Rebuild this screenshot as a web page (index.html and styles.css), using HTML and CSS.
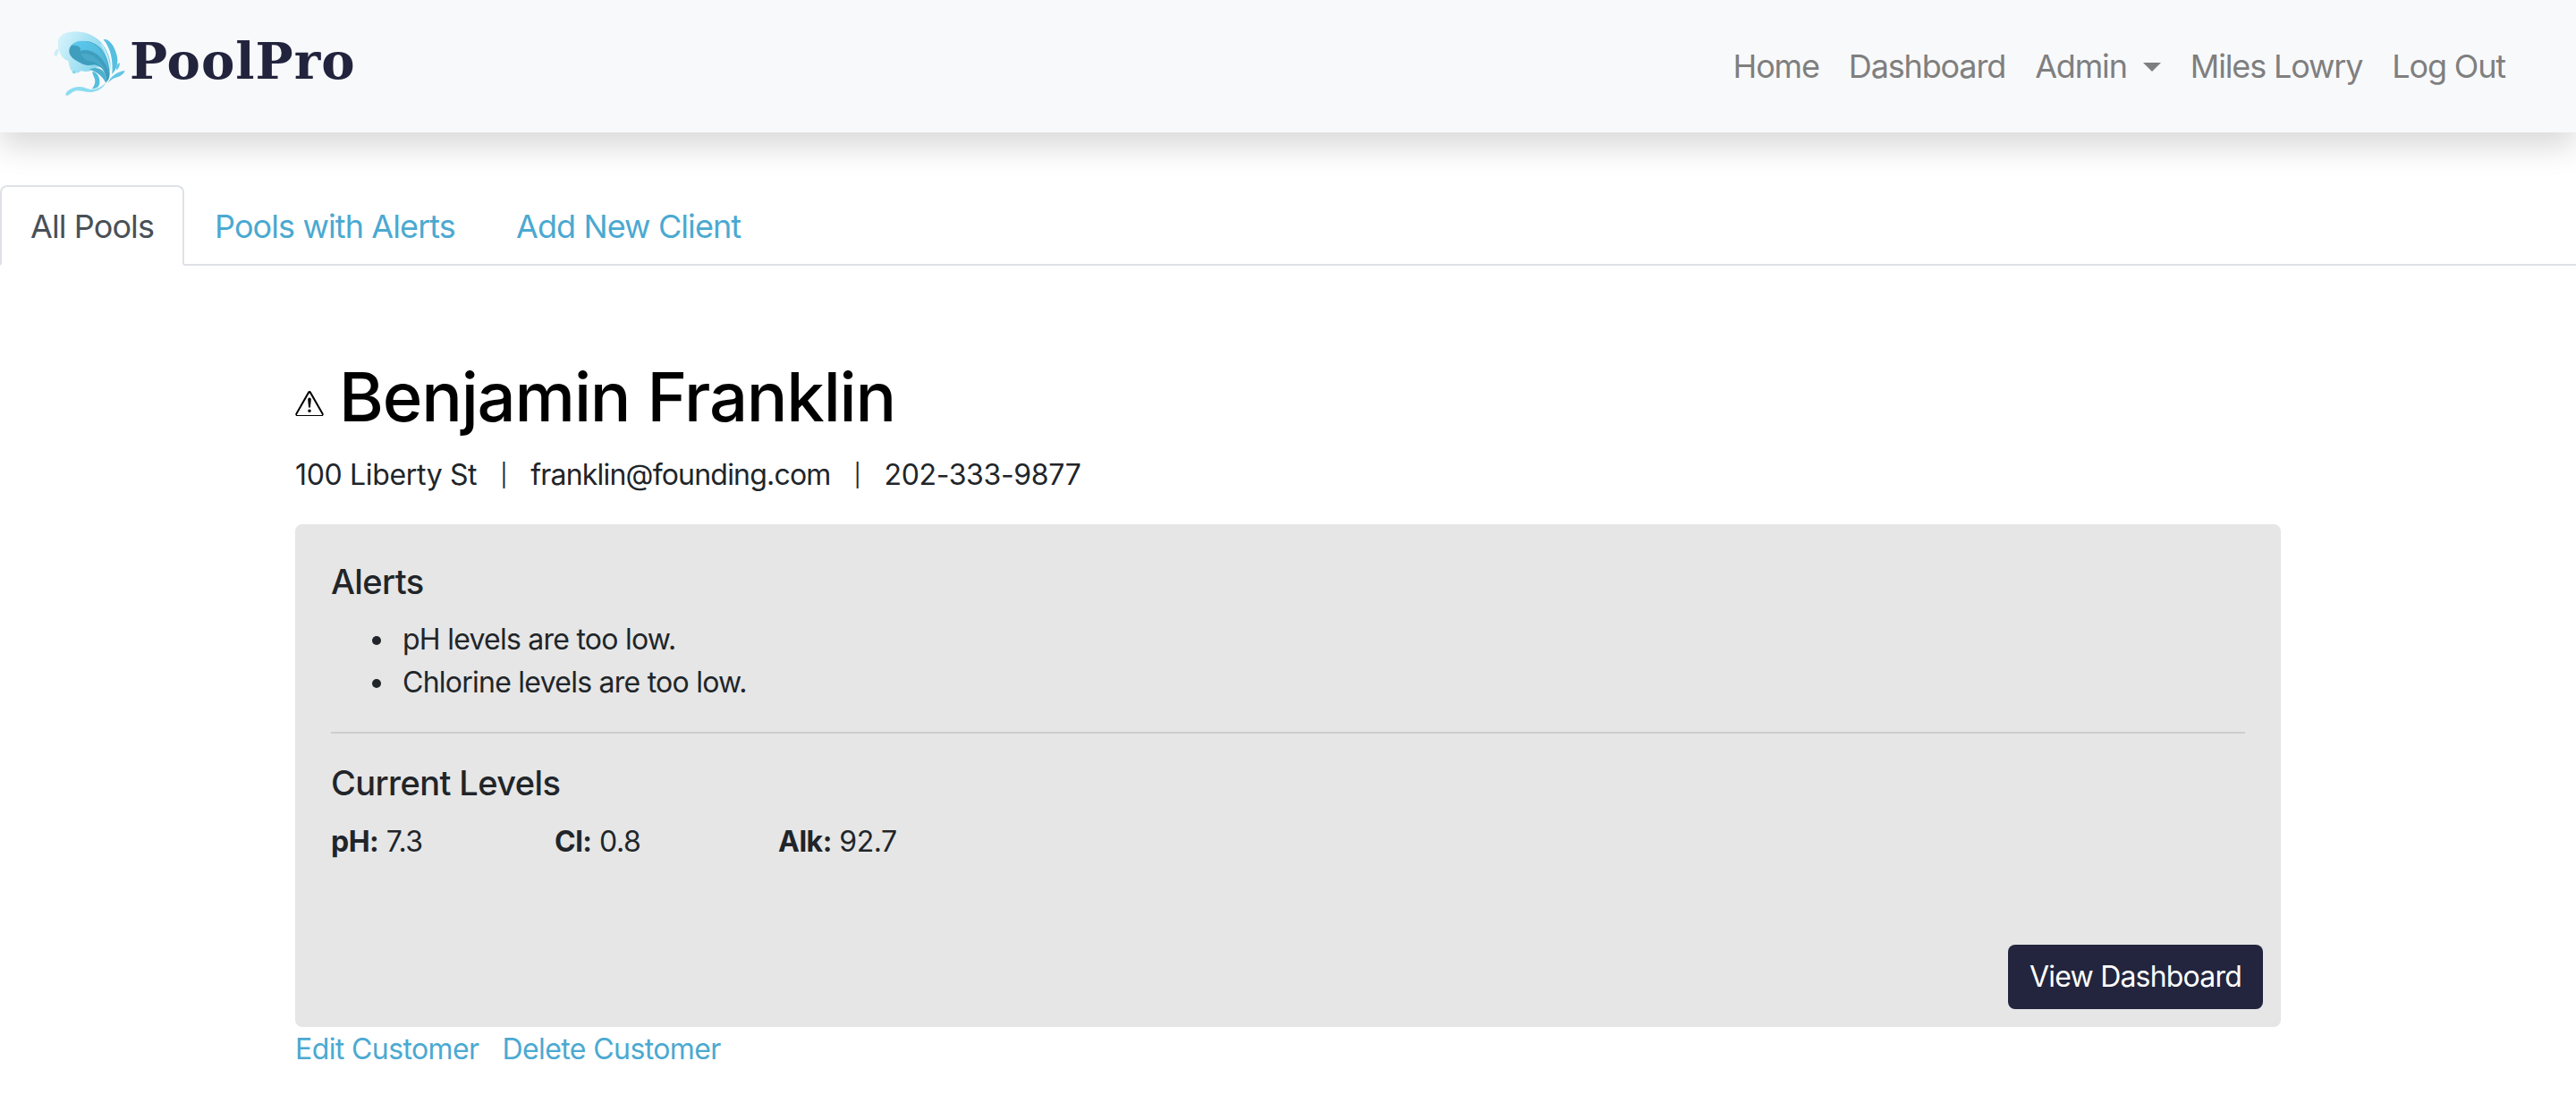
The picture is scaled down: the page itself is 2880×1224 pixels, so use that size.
FILE: index.html
```html
<!DOCTYPE html>
<html lang="en">

<head>
    <meta charset="UTF-8">
    <meta name="viewport" content="width=device-width, initial-scale=1.0">
    <title>PoolPro</title>
    <link rel="stylesheet" href="styles.css">
</head>

<body>
    <header class="navbar">
        <a href="#" class="brand">
            <svg class="brand-logo" viewBox="0 0 300 300" width="100" height="100" aria-hidden="true">
                <defs>
                    <linearGradient id="foam" x1="0" y1="0.1" x2="1" y2="0.5">
                        <stop offset="0" stop-color="#d8f4fc"/>
                        <stop offset="1" stop-color="#7ed3ec"/>
                    </linearGradient>
                    <linearGradient id="curl" x1="0" y1="0" x2="1" y2="0.9">
                        <stop offset="0" stop-color="#5ccaee"/>
                        <stop offset="1" stop-color="#4fb2d2"/>
                    </linearGradient>
                </defs>
                <!-- foam cloud behind the wave -->
                <path fill="url(#foam)" d="M45 78C50 55 85 44 122 50C165 56 198 84 212 122C222 146 224 170 216 185C205 170 188 166 172 170C160 180 140 188 122 180C108 194 88 188 84 168C80 158 82 152 78 146C56 142 40 108 45 78Z"/>
                <path fill="#c8eef8" d="M32 122C34 112 42 106 45 108C47 118 44 128 38 131C34 131 31 128 32 122Z"/>
                <circle cx="98" cy="185" r="5" fill="#7fd3ea"/>
                <!-- wave curl -->
                <path fill="#3f9dbd" d="M82 110C86 88 112 78 145 82C185 90 214 128 218 190C218 202 214 212 208 218C206 195 198 176 184 166C172 158 160 160 148 162C132 162 116 152 106 146C92 138 80 126 82 110Z"/>
                <path fill="#4aa9c9" d="M122 124C150 118 190 136 210 196C194 166 172 150 150 148C138 146 126 136 122 124Z"/>
                <path fill="url(#curl)" d="M88 96C108 72 150 76 178 100C200 120 212 150 216 186C204 152 186 128 160 116C146 110 130 110 118 114C126 100 106 92 88 96Z"/>
                <path fill="#d8f4fc" d="M190 90C208 114 218 146 222 180L219 180C214 146 204 116 188 92Z"/>
                <path fill="#56bfe0" d="M197 76C212 70 232 92 241 125C248 150 243 172 226 192C230 150 222 105 197 76Z"/>
                <!-- strands and drops -->
                <path fill="#4eb0cf" d="M150 176C172 166 196 172 204 196C208 208 208 215 205 222C196 200 176 184 150 176Z"/>
                <path fill="#62c6e4" d="M268 180C270 188 250 202 236 204C226 208 219 214 213 220C220 200 245 182 268 180Z"/>
                <path fill="#62c6e4" d="M250 153C254 160 248 174 240 178C238 168 242 158 250 153Z"/>
                <path fill="#55bedd" d="M160 182C178 186 186 205 184 222C182 236 172 240 158 241C168 230 172 215 166 203C163 196 160 190 160 182Z"/>
                <path fill="#8bdcf1" d="M70 262C70 248 92 234 118 234C135 235 150 245 165 243C180 240 196 230 206 220C196 240 175 251 155 252C135 253 115 244 102 248C88 252 78 268 70 262Z"/>
            </svg>
            <span class="brand-name">PoolPro</span>
        </a>
        <nav class="nav-links">
            <a href="#">Home</a>
            <a href="#">Dashboard</a>
            <a href="#" class="dropdown-toggle">Admin</a>
            <a href="#">Miles Lowry</a>
            <a href="#">Log Out</a>
        </nav>
    </header>

    <ul class="tabs">
        <li><a href="#" class="tab active">All Pools</a></li>
        <li><a href="#" class="tab">Pools with Alerts</a></li>
        <li><a href="#" class="tab">Add New Client</a></li>
    </ul>

    <main class="customer">
        <h1 class="customer-name">
            <svg class="warn-icon" viewBox="0 0 16 16" width="32" height="32" aria-hidden="true">
                <path fill="#000" d="M7.94 1.5a1 1 0 0 1 .12 0c.33 0 .64.18.82.5l6.85 11.96c.36.63-.08 1.54-.8 1.54H1.07c-.72 0-1.16-.91-.8-1.54L7.12 2c.18-.32.49-.5.82-.5zm.12 1.1a.2.2 0 0 0-.17.1L1.04 14.6c-.1.17 0 .4.2.4h13.52c.2 0 .3-.23.2-.4L8.11 2.7a.2.2 0 0 0-.05-.1z"/>
                <path fill="#000" d="M7.1 6.2a.9.9 0 1 1 1.8 0l-.4 4.2a.5.5 0 0 1-1 0zM7.1 12.6a.9.9 0 1 1 1.8 0 .9.9 0 0 1-1.8 0z"/>
            </svg>
            Benjamin Franklin
        </h1>
        <p class="contact">
            <span>100 Liberty St</span>
            <span class="sep">|</span>
            <span class="email">franklin@founding.com</span>
            <span class="sep">|</span>
            <span>202-333-9877</span>
        </p>

        <section class="pool-card">
            <h2>Alerts</h2>
            <ul class="alerts">
                <li>pH levels are too low.</li>
                <li>Chlorine levels are too low.</li>
            </ul>
            <hr>
            <h2>Current Levels</h2>
            <div class="levels">
                <div><b>pH:</b> 7.3</div>
                <div><b>Cl:</b> 0.8</div>
                <div><b>Alk:</b> 92.7</div>
            </div>
            <div class="card-actions">
                <a href="#" class="btn">View Dashboard</a>
            </div>
        </section>

        <div class="customer-links">
            <a href="#">Edit Customer</a>
            <a href="#">Delete Customer</a>
        </div>
    </main>
</body>

</html>
```

FILE: styles.css
```css
* {
    box-sizing: border-box;
}

html,
body {
    height: 100%;
}

body {
    margin: 0;
    background-color: #fff;
    color: #212529;
    font-family: Inter, "Liberation Sans", sans-serif;
    font-size: 32px;
    line-height: 48px;
    letter-spacing: -0.75px;
    overflow: hidden;
}

a {
    color: #4ba9d1;
    text-decoration: none;
}

.navbar {
    display: flex;
    justify-content: space-between;
    align-items: center;
    height: 148px;
    padding: 0 79px 0 50px;
    background-color: #f8f9fb;
    box-shadow: 0 16px 32px rgba(0, 0, 0, 0.15);
}

.brand {
    display: flex;
    align-items: center;
    margin-top: -10px;
}

.brand-logo {
    margin-right: -5px;
}

.brand-name {
    margin-bottom: 2px;
    color: #22243d;
    font-family: "DejaVu Serif", serif;
    font-size: 56px;
    font-weight: bold;
    letter-spacing: 1px;
}

.nav-links {
    display: flex;
    gap: 33px;
    font-size: 36px;
    letter-spacing: -1.15px;
    margin-top: -1px;
}

.nav-links a {
    color: #7f7f7f;
}

.dropdown-toggle::after {
    content: "";
    display: inline-block;
    margin-left: 18px;
    vertical-align: 7px;
    border-top: 10px solid #7f7f7f;
    border-left: 10px solid transparent;
    border-right: 10px solid transparent;
}

.tabs {
    display: flex;
    margin: 59px 0 0;
    padding: 0;
    list-style: none;
    border-bottom: 2px solid #dee2e6;
    font-size: 36px;
    letter-spacing: -0.9px;
}

.tab {
    display: block;
    height: 90px;
    padding: 20px 32px;
    margin-bottom: -2px;
    border: 2px solid transparent;
    border-radius: 8px 8px 0 0;
}

.tab.active {
    color: #495057;
    background-color: #fff;
    border-color: #dee2e6 #dee2e6 #fff;
}

.customer {
    margin: 0 330px;
}

.customer-name {
    display: flex;
    align-items: center;
    gap: 17px;
    margin: 101px 0 0;
    color: #000;
    font-size: 76px;
    font-weight: 500;
    line-height: 90px;
    letter-spacing: -1.2px;
}

.warn-icon {
    margin-top: 13px;
}

.contact {
    display: flex;
    align-items: center;
    gap: 26px;
    margin: 19px 0 0;
    color: #212529;
    letter-spacing: -0.35px;
}

.contact .email {
    letter-spacing: -0.8px;
}

.sep {
    font-size: 25px;
}

.pool-card {
    height: 562px;
    margin-top: 31px;
    padding: 41px 40px 20px;
    display: flex;
    flex-direction: column;
    background-color: #e6e6e6;
    border-radius: 8px;
}

.pool-card h2 {
    margin: 0;
    font-size: 38px;
    font-weight: 500;
    line-height: 46px;
    letter-spacing: -0.6px;
}

.alerts {
    margin: 18px 0 0;
    padding-left: 80px;
    list-style: none;
}

.alerts li::before {
    content: "";
    display: inline-block;
    width: 10px;
    height: 10px;
    margin: 0 24px 5px -34px;
    background-color: #212529;
    border-radius: 50%;
}

.pool-card hr {
    width: 100%;
    margin: 31px 0 32px;
    border: 0;
    border-top: 2px solid #cdcdcd;
}

.levels {
    display: flex;
    margin-top: 19px;
    letter-spacing: -0.5px;
}

.levels div {
    width: 250px;
}

.levels b {
    font-weight: 700;
}

.card-actions {
    display: flex;
    justify-content: flex-end;
    margin: auto -20px 0 0;
}

.btn {
    display: block;
    height: 72px;
    padding: 12px 24px;
    color: #fff;
    background-color: #23253e;
    border-radius: 8px;
    letter-spacing: -0.8px;
}

.customer-links {
    display: flex;
    gap: 26px;
    margin-top: 1px;
    letter-spacing: -0.6px;
}
```
